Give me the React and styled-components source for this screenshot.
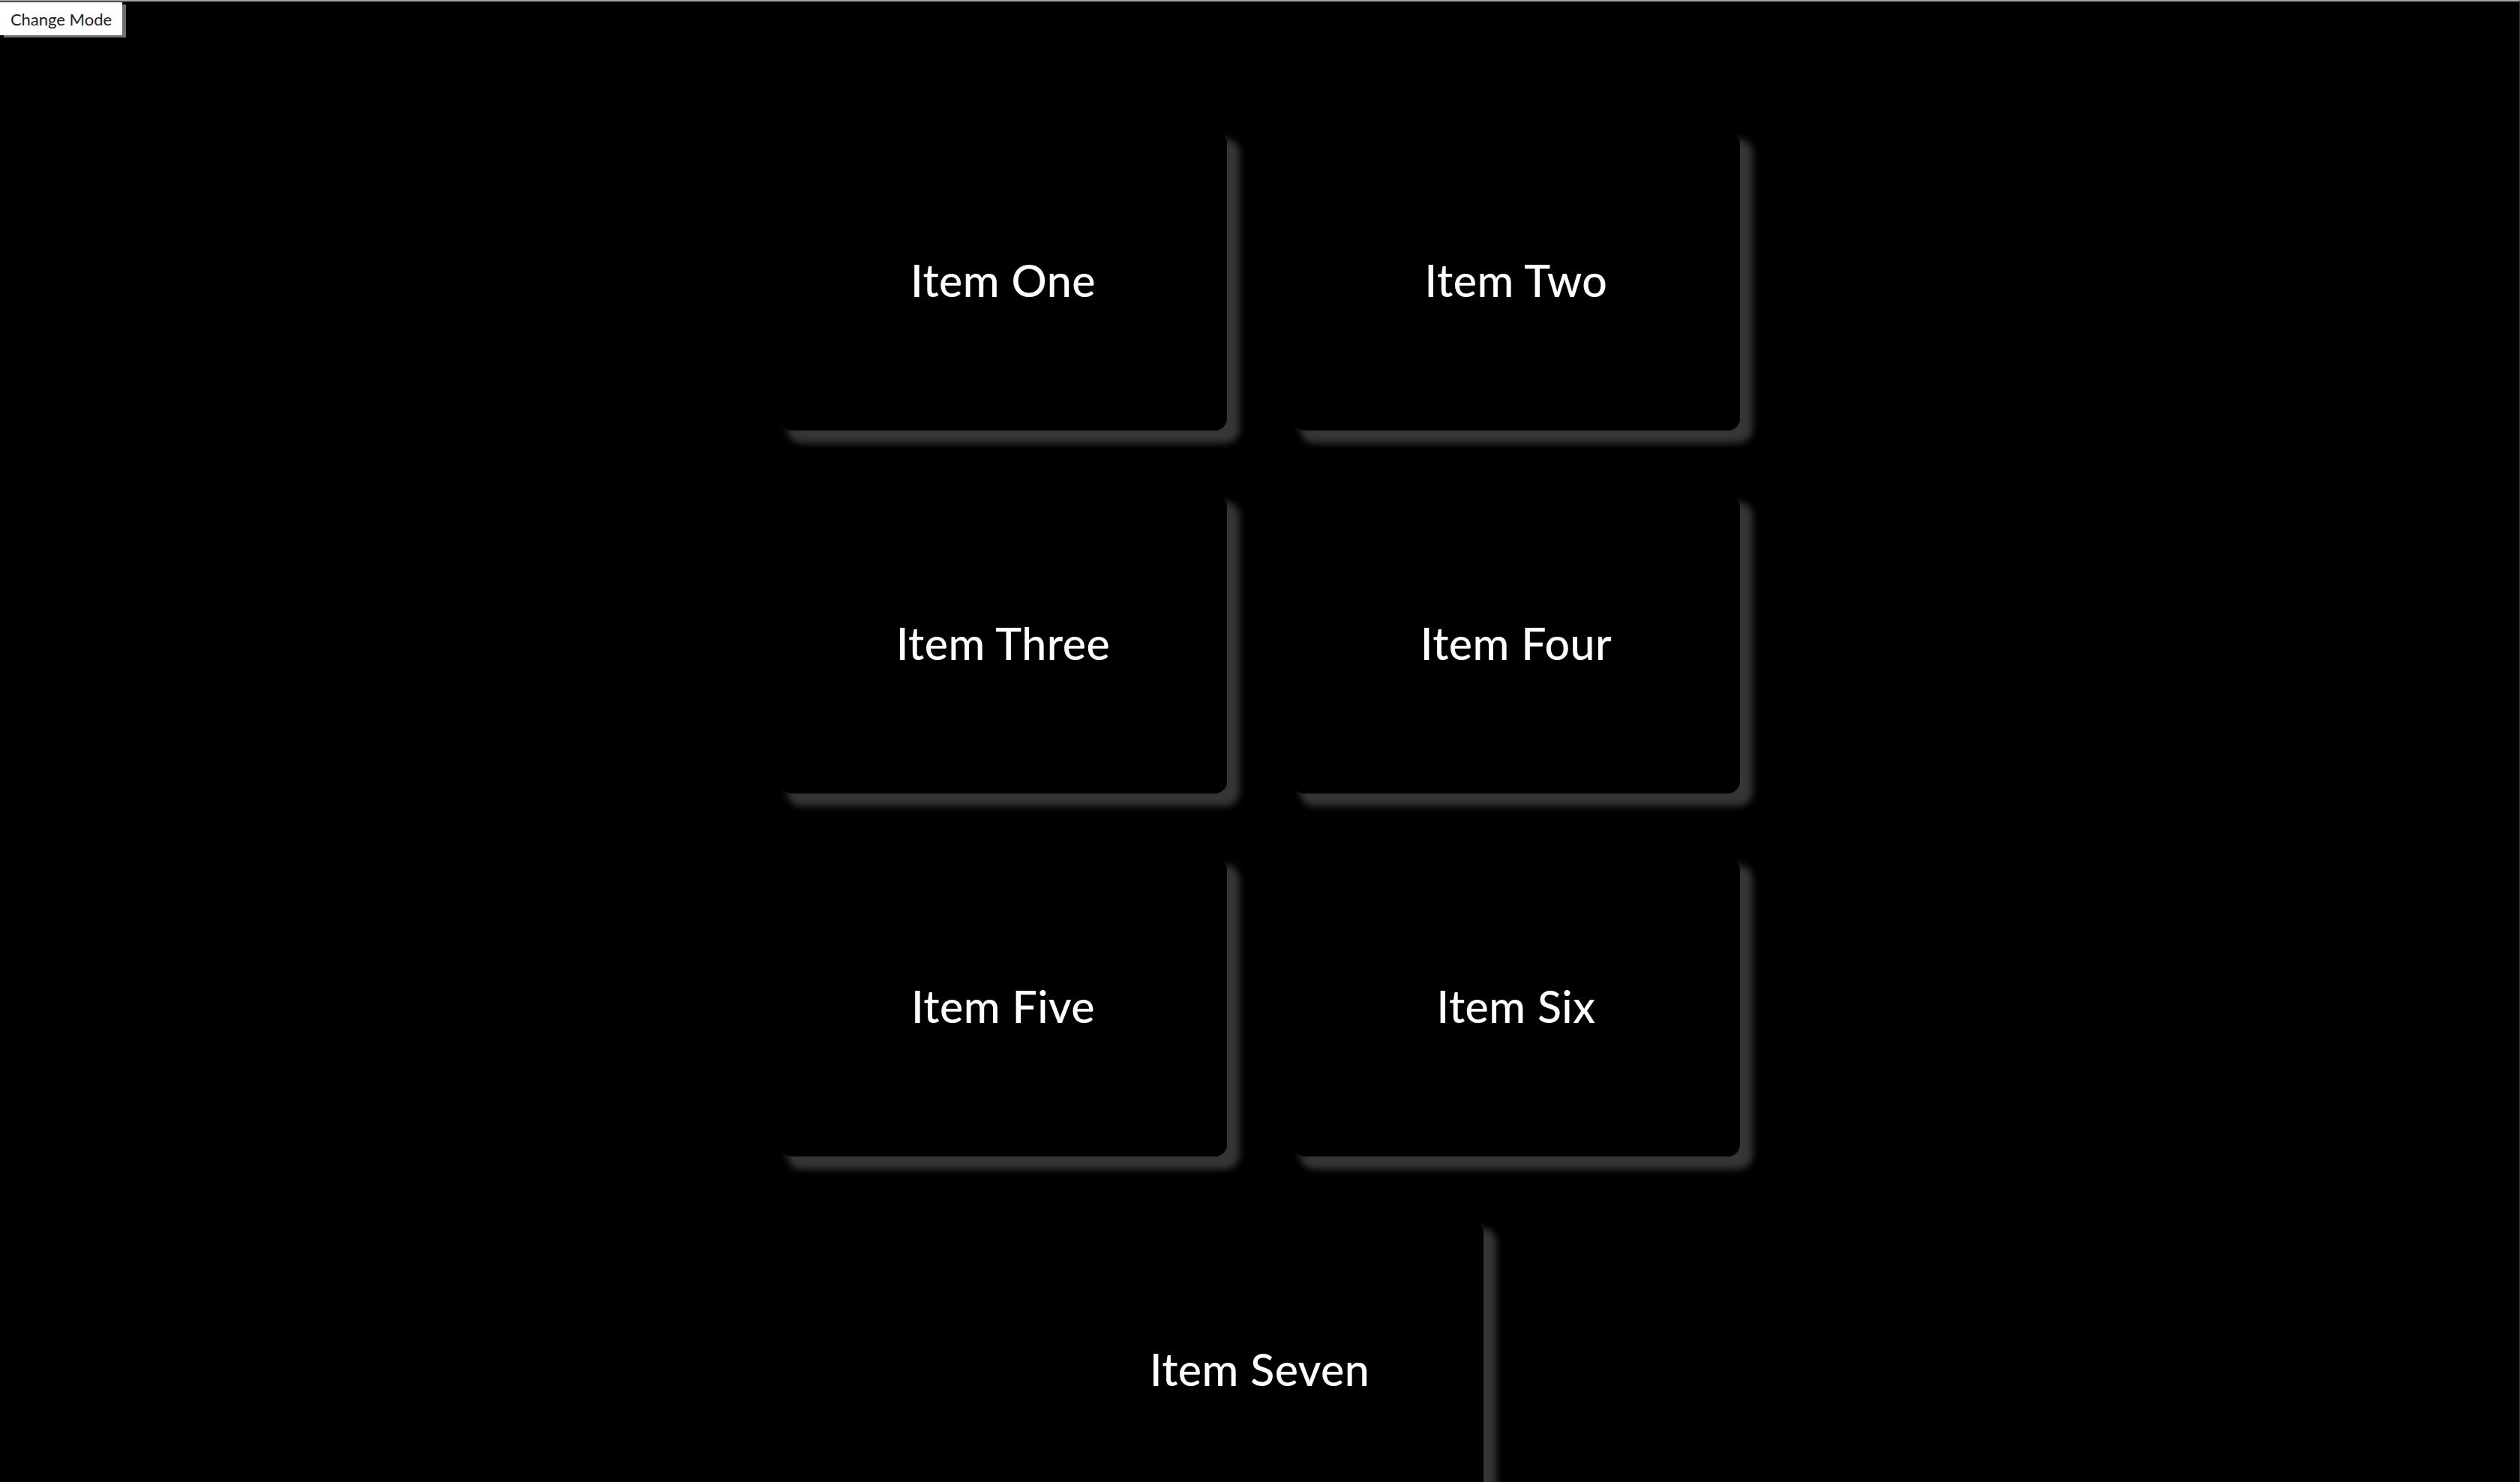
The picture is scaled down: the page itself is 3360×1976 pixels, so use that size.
import React, { useState } from 'react';
import styled, { createGlobalStyle } from 'styled-components';

const GlobalStyle = createGlobalStyle`
  html, body {
    margin: 0;
    padding: 0;
    background: #000;
  }
  * {
    box-sizing: border-box;
  }
`;

const Page = styled.div`
  min-height: 100vh;
  background: ${props => (props.dark ? '#000' : '#f2f2f2')};
  border-top: 2px solid #a3a3a3;
  border-right: 1px solid #3a3a3a;
  font-family: 'Lato', 'Noto Sans', sans-serif;
  overflow: hidden;
`;

const ModeButton = styled.button`
  display: block;
  margin: 1px 0 0 0;
  padding: 0;
  width: 163px;
  height: 44px;
  background: #fff;
  color: #222;
  border: none;
  box-shadow: 5px 3px 0 #6e6e6e;
  font-family: 'Lato', 'Noto Sans', sans-serif;
  font-size: 22px;
  text-align: center;
  cursor: pointer;
`;

const Grid = styled.ul`
  list-style: none;
  margin: 129px auto 0;
  padding: 0;
  width: 1280px;
  display: flex;
  flex-wrap: wrap;
  justify-content: center;
  column-gap: 88px;
  row-gap: 86px;
`;

const Card = styled.li`
  width: 596px;
  height: 398px;
  padding-bottom: 4px;
  display: flex;
  align-items: center;
  justify-content: center;
  border-radius: 16px;
  background: ${props => (props.dark ? '#000' : '#fff')};
  box-shadow: 13px 13px 10px 4px #353535;
  color: ${props => (props.dark ? '#fff' : '#111')};
  font-size: 59px;
  font-weight: 500;
  letter-spacing: 0.5px;
`;

const items = [
  'Item One',
  'Item Two',
  'Item Three',
  'Item Four',
  'Item Five',
  'Item Six',
  'Item Seven'
];

export default function App() {
  const [dark, setDark] = useState(true);

  return (
    <>
      <GlobalStyle />
      <Page dark={dark}>
        <ModeButton onClick={() => setDark(d => !d)}>Change Mode</ModeButton>
        <Grid>
          {items.map(item => (
            <Card key={item} dark={dark}>
              {item}
            </Card>
          ))}
        </Grid>
      </Page>
    </>
  );
}
